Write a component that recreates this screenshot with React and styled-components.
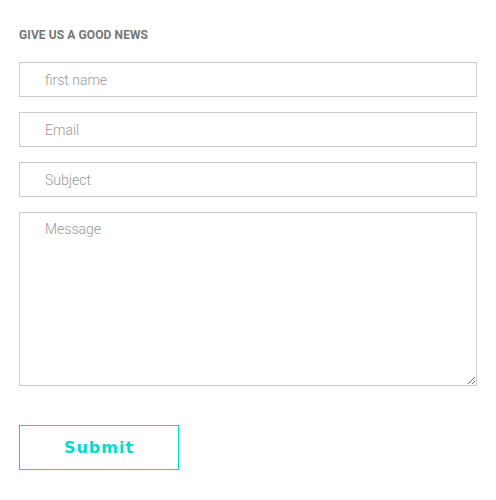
import React from 'react'
import styled, { createGlobalStyle } from 'styled-components'

const GlobalStyle = createGlobalStyle`
  body {
    margin: 0;
    background: #fff;
    font-family: Roboto, "Liberation Sans", sans-serif;
  }
`

function App() {
  return (
    <>
      <GlobalStyle />
      <Form onSubmit={(e) => e.preventDefault()}>
        <Title>Give us a good news</Title>
        <Field type="text" placeholder="first name" />
        <Field type="email" placeholder="Email" />
        <Field type="text" placeholder="Subject" />
        <Message placeholder="Message" />
        <Submit type="submit">Submit</Submit>
      </Form>
    </>
  )
}

export default App

const Form = styled.form`
  display: flex;
  flex-direction: column;
  align-items: flex-start;
  gap: 15px;
  padding: 28px 19px 30px 19px;
  width: 458px;
`

const Title = styled.h4`
  margin: 0 0 5px 0;
  font-family: Roboto, "Liberation Sans", sans-serif;
  font-size: 12px;
  font-weight: 700;
  text-transform: uppercase;
  letter-spacing: 0.1px;
  color: #757575;
  line-height: 14px;
`

const Field = styled.input`
  box-sizing: border-box;
  width: 100%;
  height: 35px;
  margin: 0;
  padding: 1px 25px 0 25px;
  border: 1px solid #cccccc;
  border-radius: 0;
  outline: none;
  font-family: Roboto, "Liberation Sans", sans-serif;
  font-size: 14px;
  font-weight: 300;
  color: #555;

  &::placeholder {
    color: #999;
  }
`

const Message = styled.textarea`
  box-sizing: border-box;
  width: 100%;
  height: 174px;
  margin: 0;
  padding: 8px 25px;
  border: 1px solid #cccccc;
  border-radius: 0;
  outline: none;
  font-family: Roboto, "Liberation Sans", sans-serif;
  font-size: 14px;
  font-weight: 300;
  color: #555;

  &::placeholder {
    color: #999;
  }
`

const Submit = styled.button`
  margin-top: 24px;
  width: 160px;
  height: 45px;
  background: #fff;
  border: 1px solid #00dcc8;
  border-radius: 0;
  color: #00dcc8;
  font-family: "DejaVu Sans", Verdana, sans-serif;
  font-size: 16px;
  font-weight: 700;
  letter-spacing: 1px;
  cursor: pointer;
`
